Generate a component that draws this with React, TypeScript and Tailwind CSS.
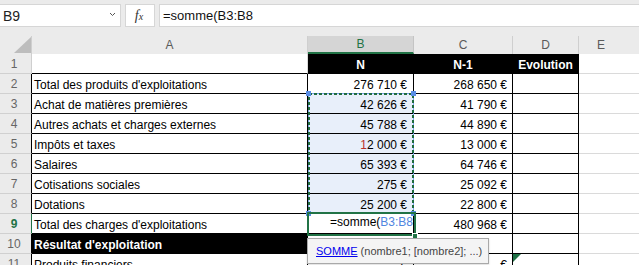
import React from "react";

type Row = {
  n: number;
  a: string;
  b?: React.ReactNode;
  c?: string;
  d?: string;
  kind?: "head" | "black" | "normal";
};

const rows: Row[] = [
  { n: 1, a: "", b: "N", c: "N-1", d: "Evolution", kind: "head" },
  { n: 2, a: "Total des produits d'exploitations", b: "276 710 €", c: "268 650 €" },
  { n: 3, a: "Achat de matières premières", b: "42 626 €", c: "41 790 €" },
  { n: 4, a: "Autres achats et charges externes", b: "45 788 €", c: "44 890 €" },
  {
    n: 5,
    a: "Impôts et taxes",
    b: (
      <>
        <span className="text-[#b8322a]">1</span>2 000 €
      </>
    ),
    c: "13 000 €",
  },
  { n: 6, a: "Salaires", b: "65 393 €", c: "64 746 €" },
  { n: 7, a: "Cotisations sociales", b: "275 €", c: "25 092 €" },
  { n: 8, a: "Dotations", b: "25 200 €", c: "22 800 €" },
  { n: 9, a: "Total des charges d'exploitations", b: "", c: "480 968 €" },
  { n: 10, a: "Résultat d'exploitation", b: "", c: "", kind: "black" },
  { n: 11, a: "Produits financiers", b: "- €", c: "- €" },
  { n: 12, a: "", b: "", c: "" },
];

export default function App() {
  return (
    <div className="w-[639px] h-[265px] overflow-hidden bg-[#ebebeb] font-['Liberation_Sans',Arial,sans-serif] select-none">
      {/* Formula bar */}
      <div className="h-[36px] flex items-start pt-[4px]">
        <div className="w-[121px] h-[23px] bg-white border-y border-r border-[#d6d6d6] flex items-center justify-between pl-[3px] pr-[4px]">
          <span className="text-[14px] text-[#222] leading-none">B9</span>
          <svg width="7" height="5" viewBox="0 0 7 5" className="mt-[-3px]">
            <path d="M1 1 L3.5 3.5 L6 1" fill="none" stroke="#555" strokeWidth="1" />
          </svg>
        </div>
        <div className="ml-[4px] w-[30px] h-[23px] bg-white border border-[#d6d6d6] flex items-center justify-center pr-[2px]">
          <span className="font-['Liberation_Serif',serif] italic text-[14px] text-[#333] leading-none">
            f<span className="text-[10px]">x</span>
          </span>
        </div>
        <div className="ml-[4px] flex-1 h-[23px] bg-white border-y border-l border-[#d6d6d6] flex items-center pl-[3px]">
          <span className="text-[13px] text-[#111] leading-none">=somme(B3:B8</span>
        </div>
      </div>

      {/* Column headers */}
      <div className="h-[18px] flex text-[12px] text-[#5a5a5a]">
        <div className="w-[32px] h-full border-r border-[#cfcfcf] relative">
          <svg width="17" height="16" viewBox="0 0 17 16" className="absolute left-[14px] top-[1px]">
            <polygon points="17,0 17,16 0,16" fill="#bdbdbd" />
          </svg>
        </div>
        <div className="w-[276px] h-full border-r border-[#cfcfcf] flex items-center justify-center">A</div>
        <div className="w-[106px] h-full bg-[#d5d5d5] border-r border-[#c4c4c4] border-b-2 border-b-[#217346] flex items-center justify-center text-[#217346]">
          B
        </div>
        <div className="w-[99px] h-full border-r border-[#cfcfcf] flex items-center justify-center">C</div>
        <div className="w-[66px] h-full border-r border-[#cfcfcf] flex items-center justify-center">D</div>
        <div className="flex-1 h-full flex items-center justify-center pr-[16px]">E</div>
      </div>

      {/* Grid */}
      <div className="relative bg-white">
        {rows.map((r) => {
          const inTable = r.n >= 2 && r.n <= 11;
          const headerBorder =
            r.n === 9 ? "border-r-[#217346]" : inTable ? "border-r-black" : "border-r-[#cfcfcf]";
          const cellBorder = r.n <= 11 ? "border-black" : "border-[#dadada]";
          const rangeFill = r.n >= 3 && r.n <= 8 ? "bg-[#e8effa]" : "bg-white";
          return (
            <div key={r.n} className="h-[20px] flex">
              <div
                className={`w-[32px] h-full bg-[#ebebeb] border-b border-b-[#d0d0d0] border-r ${headerBorder} flex items-center justify-center pr-[3px] text-[12px] ${
                  r.n === 9 ? "text-[#217346] font-bold" : "text-[#666]"
                }`}
              >
                {r.n}
              </div>
              {/* A */}
              <div
                className={`w-[276px] h-full border-b border-r ${
                  r.n === 1 ? "border-b-black border-r-[#dadada]" : cellBorder
                } ${r.kind === "black" ? "bg-black text-white font-bold" : "text-black"} flex items-end pl-[2px] pb-[1px] text-[12px] leading-[14px] whitespace-nowrap overflow-hidden`}
              >
                {r.a}
              </div>
              {/* B */}
              {r.kind === "head" ? (
                <>
                  <div className="w-[106px] h-full bg-black border-r border-black text-white font-bold text-[12px] leading-[14px] flex items-end justify-center pb-[2px]">
                    {r.b}
                  </div>
                  <div className="w-[99px] h-full bg-black border-r border-black text-white font-bold text-[12px] leading-[14px] flex items-end justify-center pb-[2px]">
                    {r.c}
                  </div>
                  <div className="w-[66px] h-full bg-black border-r border-black text-white font-bold text-[12px] leading-[14px] flex items-end justify-center pb-[2px]">
                    {r.d}
                  </div>
                </>
              ) : (
                <>
                  {r.n === 9 ? (
                    <div className="w-[106px] h-full border-b border-r border-black bg-white flex items-start justify-end pt-[1px] text-[12px] leading-[14px] whitespace-nowrap overflow-hidden">
                      <span className="text-black">=somme(</span>
                      <span className="text-[#4f86e0]">B3:B8</span>
                    </div>
                  ) : (
                    <div
                      className={`w-[106px] h-full border-b border-r ${cellBorder} ${rangeFill} flex items-end justify-end pr-[6px] pb-[1px] text-[12px] leading-[14px] text-black whitespace-nowrap`}
                    >
                      {r.b}
                    </div>
                  )}
                  <div
                    className={`w-[99px] h-full border-b border-r ${cellBorder} flex items-end justify-end pr-[5px] pb-[1px] text-[12px] leading-[14px] text-black whitespace-nowrap`}
                  >
                    {r.c}
                  </div>
                  <div className={`w-[66px] h-full border-b border-r ${cellBorder}`}></div>
                </>
              )}
              {/* E */}
              <div className="flex-1 h-full border-b border-[#dadada]"></div>
            </div>
          );
        })}

        {/* Reference range B3:B8 */}
        <svg
          width="107"
          height="121"
          viewBox="0 0 107 121"
          className="absolute left-[308px] top-[39px] pointer-events-none"
        >
          <rect x="0.5" y="0.5" width="105" height="119" fill="none" stroke="#7aa3ea" strokeWidth="1" />
          <rect
            x="1"
            y="1"
            width="104"
            height="119"
            fill="none"
            stroke="#1f6b3f"
            strokeWidth="2"
            strokeDasharray="3 2"
          />
        </svg>
        <div className="absolute left-[306px] top-[37px] w-[5px] h-[5px] bg-[#5a8ee6]" />
        <div className="absolute left-[411px] top-[37px] w-[5px] h-[5px] bg-[#5a8ee6]" />
        <div className="absolute left-[306px] top-[157px] w-[5px] h-[5px] bg-[#5a8ee6]" />
        <div className="absolute left-[411px] top-[157px] w-[5px] h-[5px] bg-[#5a8ee6]" />

        {/* Active cell B9 */}
        <div className="absolute left-[307px] top-[158px] w-[109px] h-[24px] border-2 border-[#217346] pointer-events-none" />
        <div className="absolute left-[412px] top-[179px] w-[6px] h-[6px] bg-[#217346] border border-white" />

        {/* Error indicator D11 */}
        <svg width="8" height="8" viewBox="0 0 8 8" className="absolute left-[513px] top-[200px]">
          <polygon points="0,0 8,0 0,8" fill="#1e7145" />
        </svg>

        {/* Function tooltip */}
        <div className="absolute left-[307px] top-[184px] w-[182px] h-[26px] bg-[#f4f4f4] border border-[#a9a9a9] shadow-[0_1px_2px_rgba(0,0,0,0.15)] flex items-center pl-[8px] text-[11px] whitespace-nowrap">
          <span className="text-[#0000ee] underline">SOMME</span>
          <span className="text-[#444]">&nbsp;(nombre1; [nombre2]; ...)</span>
        </div>
      </div>
    </div>
  );
}
